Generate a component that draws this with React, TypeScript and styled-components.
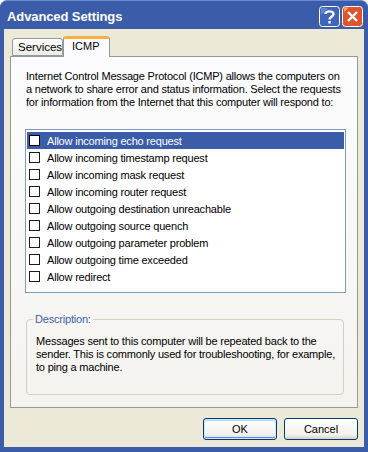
import React from "react";
import styled, { createGlobalStyle } from "styled-components";

const GlobalStyle = createGlobalStyle`
  html, body {
    margin: 0;
    padding: 0;
    background: #ffffff;
  }
  body {
    font-family: "Liberation Sans", Arial, sans-serif;
    font-size: 11px;
    letter-spacing: -0.2px;
  }
`;

const rules = [
  "Allow incoming echo request",
  "Allow incoming timestamp request",
  "Allow incoming mask request",
  "Allow incoming router request",
  "Allow outgoing destination unreachable",
  "Allow outgoing source quench",
  "Allow outgoing parameter problem",
  "Allow outgoing time exceeded",
  "Allow redirect",
];

const HelpIcon = () => (
  <svg width="21" height="21" viewBox="0 0 21 21">
    <rect x="0.5" y="0.5" width="20" height="20" rx="3" fill="#3f64b8" stroke="#ffffff" />
    <path d="M2 2 L9 2 L2 9 Z" fill="#6d8fd6" opacity="0.8" />
    <path
      d="M6.5 8 C6.5 4.5 14.5 4.5 14.5 8 C14.5 11 10.5 10.5 10.5 13.5"
      stroke="#ffffff"
      strokeWidth="2.4"
      fill="none"
    />
    <rect x="9.3" y="15" width="2.5" height="2.5" fill="#ffffff" />
  </svg>
);

const CloseIcon = () => (
  <svg width="21" height="21" viewBox="0 0 21 21">
    <rect x="0.5" y="0.5" width="20" height="20" rx="3" fill="#e0542c" stroke="#ffffff" />
    <path d="M2 1.5 L7 1.5 L2 6 Z" fill="#f5a35c" />
    <path d="M6 6 L15 15 M15 6 L6 15" stroke="#ffffff" strokeWidth="2.4" />
  </svg>
);

const App = () => {
  return (
    <>
      <GlobalStyle />
      <Window>
        <TitleBar>
          <Title>Advanced Settings</Title>
          <TitleButtons>
            <HelpIcon />
            <CloseIcon />
          </TitleButtons>
        </TitleBar>
        <Client>
          <TabStrip>
            <Tab>Services</Tab>
            <Tab active>ICMP</Tab>
          </TabStrip>
          <Panel>
            <Intro>
              Internet Control Message Protocol (ICMP) allows the computers on
              a network to share error and status information. Select the
              requests for information from the Internet that this computer
              will respond to:
            </Intro>
            <ListBox>
              {rules.map((r, i) => (
                <Row key={r} selected={i === 0}>
                  <Check selected={i === 0} />
                  <span>{r}</span>
                </Row>
              ))}
            </ListBox>
            <GroupBox>
              <Legend>Description:</Legend>
              <DescText>
                Messages sent to this computer will be repeated back to the
                sender. This is commonly used for troubleshooting, for example,
                to ping a machine.
              </DescText>
            </GroupBox>
          </Panel>
          <Footer>
            <Button isDefault>OK</Button>
            <Button>Cancel</Button>
          </Footer>
        </Client>
      </Window>
    </>
  );
};

const Window = styled.div`
  width: 368px;
  height: 452px;
  box-sizing: border-box;
  background: #3b5ca9;
  border-radius: 7px 7px 0 0;
  border-top: 1px solid #6b8bd0;
  display: flex;
  flex-direction: column;
`;

const TitleBar = styled.div`
  height: 28px;
  display: flex;
  align-items: center;
  justify-content: space-between;
  padding: 0 5px 0 7px;
`;

const Title = styled.div`
  font-family: "Liberation Sans", Arial, sans-serif;
  font-weight: bold;
  font-size: 13px;
  color: #ffffff;
  letter-spacing: -0.1px;
  padding-top: 2px;
`;

const TitleButtons = styled.div`
  display: flex;
  gap: 2px;
  padding-top: 2px;
`;

const Client = styled.div`
  flex: 1;
  margin: 0 4px 5px 4px;
  background: #ece9d8;
  display: flex;
  flex-direction: column;
  padding: 7px 6px 0 6px;
`;

const TabStrip = styled.div`
  display: flex;
  align-items: flex-end;
  height: 20px;
  padding-left: 2px;
  position: relative;
  z-index: 1;
`;

const Tab = styled.div<{ active?: boolean }>`
  box-sizing: border-box;
  height: ${(p) => (p.active ? "21px" : "18px")};
  margin-bottom: ${(p) => (p.active ? "-1px" : "0")};
  padding: ${(p) => (p.active ? "1px 8px 0 8px" : "2px 5px 0 5px")};
  width: ${(p) => (p.active ? "47px" : "51px")};
  background: ${(p) =>
    p.active ? "#fcfcfe" : "linear-gradient(#ffffff, #ecebe5)"};
  border: 1px solid #919b9c;
  border-bottom: ${(p) => (p.active ? "none" : "1px solid #919b9c")};
  border-top: ${(p) => (p.active ? "3px solid #f6b042" : "1px solid #919b9c")};
  border-radius: 3px 3px 0 0;
  color: #000000;
  font-size: ${(p) => (p.active ? "11px" : "11.5px")};
  letter-spacing: 0;
  white-space: nowrap;
`;

const Panel = styled.div`
  box-sizing: border-box;
  height: 352px;
  border: 1px solid #919b9c;
  background: linear-gradient(#fcfcfe, #f4f3ee);
  padding: 13px 8px 0 15px;
  display: flex;
  flex-direction: column;
`;

const Intro = styled.p`
  margin: 0;
  line-height: 13px;
  color: #000000;
  width: 322px;
`;

const ListBox = styled.div`
  margin: 20px 0 0 -1px;
  width: 321px;
  height: 164px;
  box-sizing: border-box;
  border: 1px solid #7f9db9;
  background: #ffffff;
  padding: 2px 1px;
`;

const Row = styled.div<{ selected?: boolean }>`
  height: 17px;
  display: flex;
  align-items: center;
  gap: 7px;
  padding-left: 2px;
  background: ${(p) => (p.selected ? "#3b5ca9" : "transparent")};
  color: ${(p) => (p.selected ? "#ffffff" : "#000000")};
`;

const Check = styled.span<{ selected?: boolean }>`
  width: 11px;
  height: 11px;
  box-sizing: border-box;
  border: 1px solid ${(p) => (p.selected ? "#000000" : "#1c1c1c")};
  background: #ffffff;
  flex-shrink: 0;
`;

const GroupBox = styled.fieldset`
  margin: 20px 0 0 0;
  width: 318px;
  height: 82px;
  box-sizing: border-box;
  border: 1px solid #d0d0bf;
  border-radius: 4px;
  padding: 10px 0 0 9px;
`;

const Legend = styled.legend`
  color: #3d5fb3;
  padding: 0 2px;
  margin-left: -3px;
  font-size: 11px;
`;

const DescText = styled.p`
  margin: 0;
  line-height: 13px;
  color: #000000;
`;

const Footer = styled.div`
  display: flex;
  justify-content: flex-end;
  gap: 7px;
  padding-top: 10px;
`;

const Button = styled.button<{ isDefault?: boolean }>`
  width: 74px;
  height: 22px;
  box-sizing: border-box;
  border: 1px solid #003c74;
  border-radius: 3px;
  background: linear-gradient(#ffffff, #f2f1eb 80%, #d6d0c5);
  box-shadow: ${(p) =>
    p.isDefault
      ? "inset 0 0 0 1px #cee7ff, inset 0 -2px 0 #6982ee, inset 0 2px 0 #bcd4f6"
      : "none"};
  font-family: "Liberation Sans", Arial, sans-serif;
  font-size: 11px;
  color: #000000;
  padding: 0;
`;

export default App;
